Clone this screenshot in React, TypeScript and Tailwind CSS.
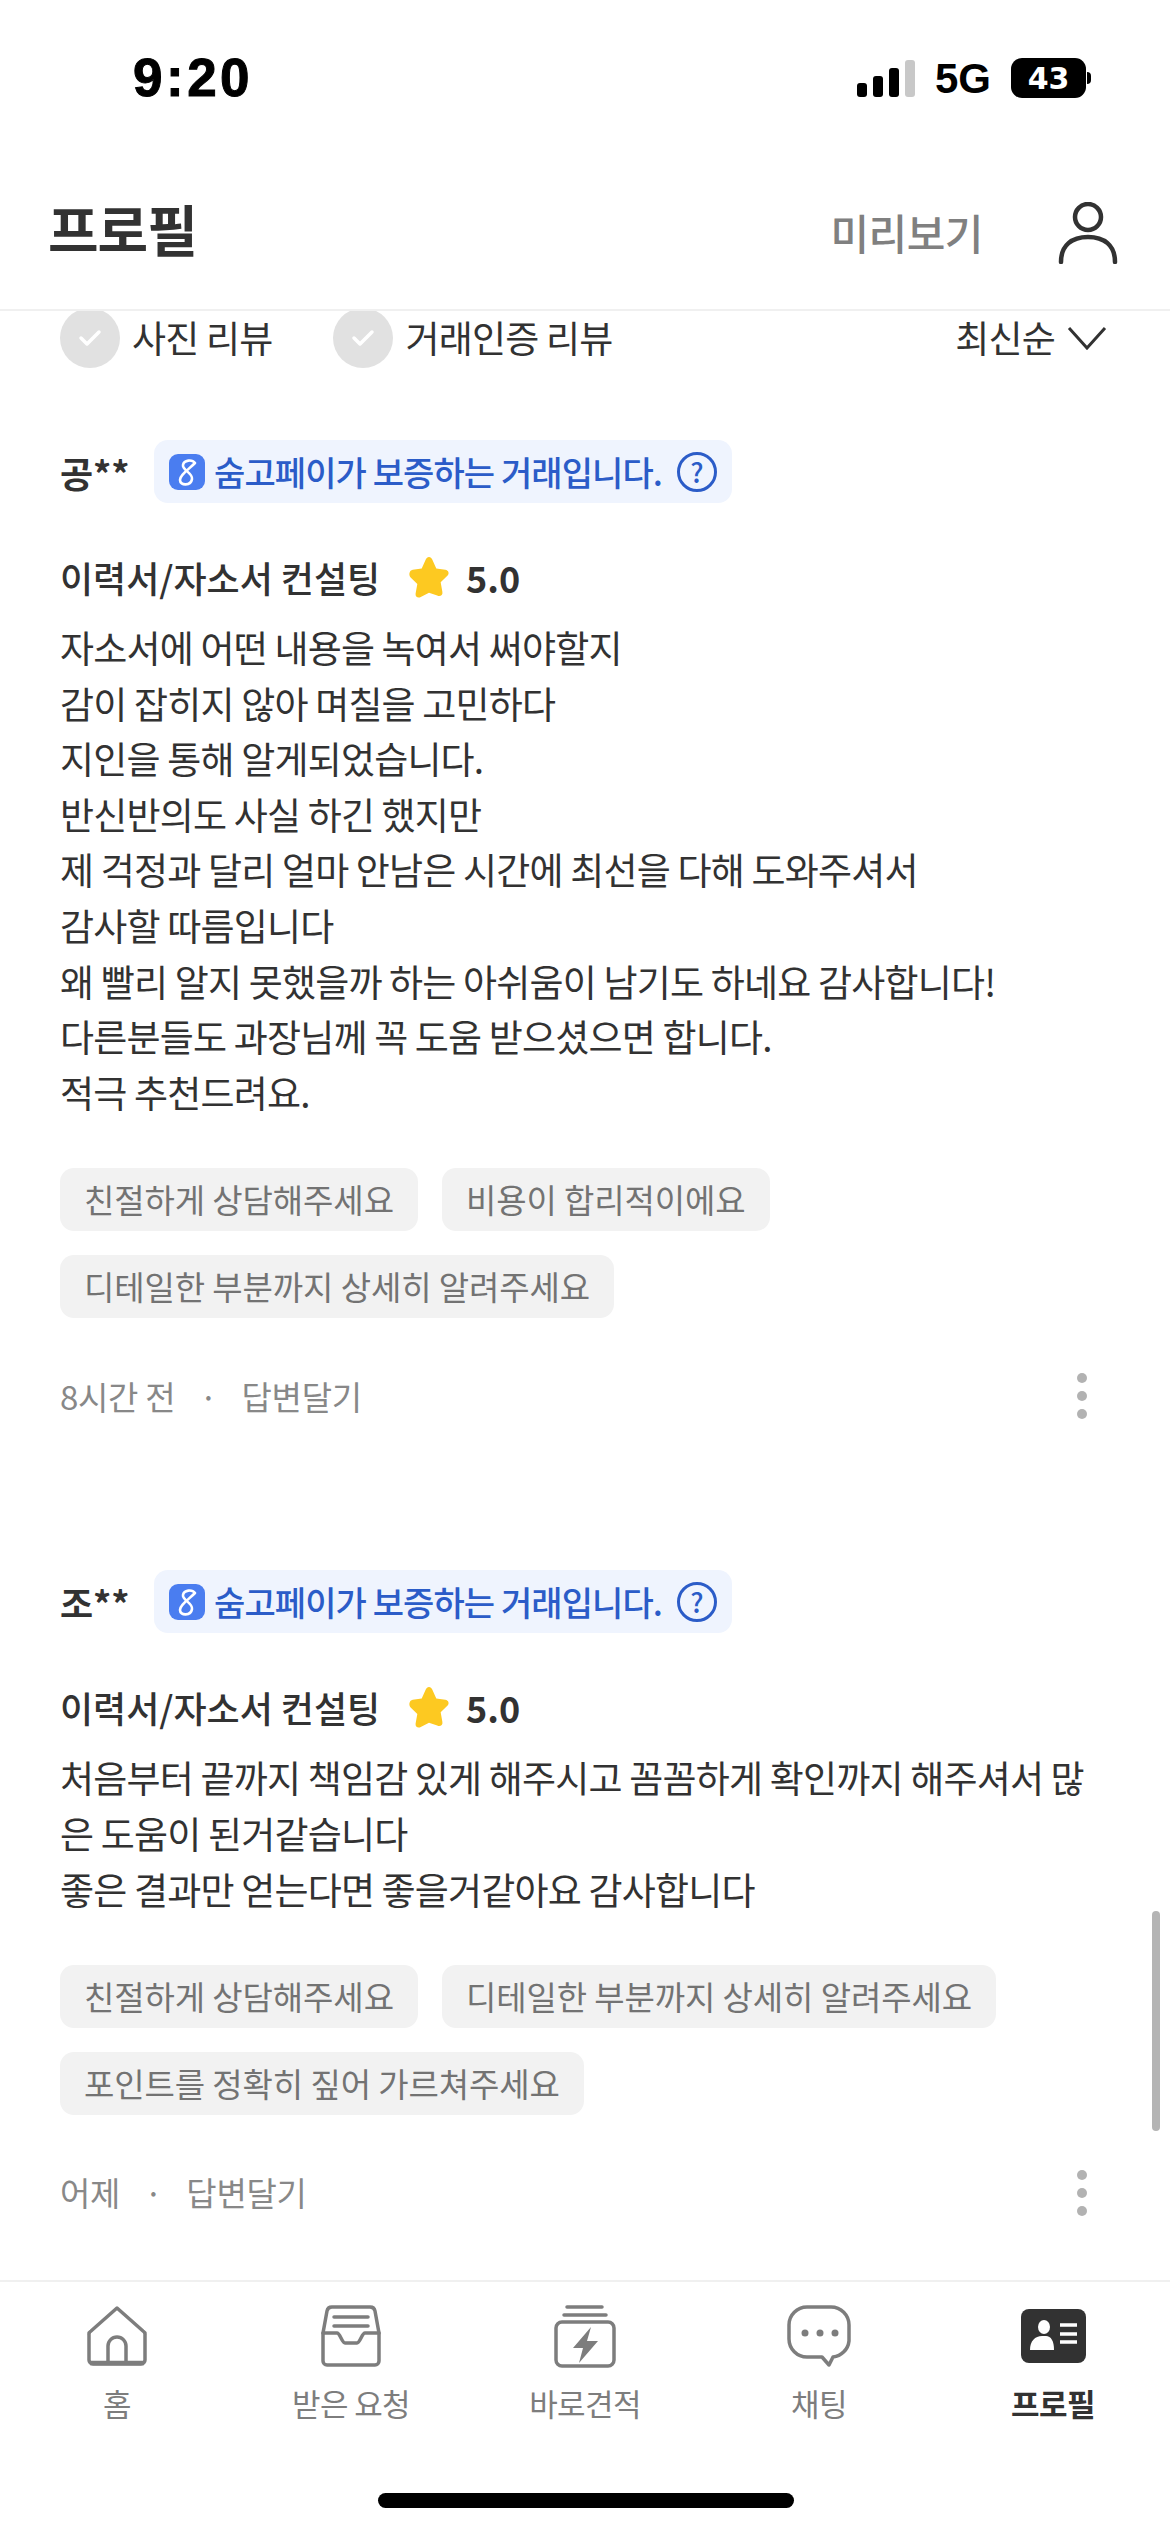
const font = { fontFamily: '"Noto Sans CJK KR", "Noto Sans", sans-serif' };
const latin = { fontFamily: '"Liberation Sans", sans-serif' };

interface Review {
  name: string;
  lines: string[];
  chips: string[][];
  time: string;
}

const reviews: Review[] = [
  {
    name: "공**",
    lines: [
      "자소서에 어떤 내용을 녹여서 써야할지",
      "감이 잡히지 않아 며칠을 고민하다",
      "지인을 통해 알게되었습니다.",
      "반신반의도 사실 하긴 했지만",
      "제 걱정과 달리 얼마 안남은 시간에 최선을 다해 도와주셔서",
      "감사할 따름입니다",
      "왜 빨리 알지 못했을까 하는 아쉬움이 남기도 하네요 감사합니다!",
      "다른분들도 과장님께 꼭 도움 받으셨으면 합니다.",
      "적극 추천드려요.",
    ],
    chips: [["친절하게 상담해주세요", "비용이 합리적이에요"], ["디테일한 부분까지 상세히 알려주세요"]],
    time: "8시간 전",
  },
  {
    name: "조**",
    lines: [
      "처음부터 끝까지 책임감 있게 해주시고 꼼꼼하게 확인까지 해주셔서 많",
      "은 도움이 된거같습니다",
      "좋은 결과만 얻는다면 좋을거같아요 감사합니다",
    ],
    chips: [["친절하게 상담해주세요", "디테일한 부분까지 상세히 알려주세요"], ["포인트를 정확히 짚어 가르쳐주세요"]],
    time: "어제",
  },
];

const CheckCircle = () => (
  <div className="flex h-[60px] w-[60px] items-center justify-center rounded-full bg-[#e1e1e1]">
    <svg width="28" height="22" viewBox="0 0 28 22" fill="none">
      <path d="M5 11l6 6L23 5" stroke="#fff" strokeWidth="3.5" strokeLinecap="round" strokeLinejoin="round" />
    </svg>
  </div>
);

const ReviewCard = ({ review }: { review: Review }) => (
  <div className="flex flex-col">
    <div className="flex h-[63px] items-center">
      <span className="w-[94px] text-[36px] font-bold text-[#323232]">{review.name}</span>
      <div className="flex h-[63px] w-[578px] items-center rounded-[14px] bg-[#eff4fe] pl-[15px]">
        <svg width="36" height="36" viewBox="0 0 36 36" className="shrink-0">
          <rect width="36" height="36" rx="9" fill="#4a7df0" />
          <path d="M26 9C23 5 15 6 14 11C13 16 24 19 23 25C22 32 11 32 11 26C11 21 19 16 26 9" fill="none" stroke="#fff" strokeWidth="2.6" strokeLinecap="round" strokeLinejoin="round" />
        </svg>
        <span className="ml-[9px] w-[463px] text-[34px] font-medium whitespace-nowrap tracking-[-0.9px] text-[#2b5cc8]">숨고페이가 보증하는 거래입니다.</span>
        <div className="flex h-[40px] w-[40px] items-center justify-center rounded-full border-[3px] border-[#2b5cc8] text-[27px] leading-none font-medium text-[#2b5cc8]">?</div>
      </div>
    </div>

    <div className="mt-[52px] flex h-[44px] items-center">
      <span className="w-[347px] text-[36px] font-medium whitespace-nowrap text-[#323232]">이력서/자소서 컨설팅</span>
      <svg width="46" height="44" viewBox="0 0 24 23" className="-ml-[1px]">
        <path d="M12 1c.8 0 1.300.6 1.700 1.400l2.100 4.600 4.700.7c1.800.3 2.300 2 1.100 3.200l-3.500 3.400.9 5c.3 1.700-1.200 2.700-2.700 1.900L12 19.700l-4.300 2.300c-1.500.8-3-.2-2.700-1.900l.9-5-3.500-3.400C1.200 10.500 1.700 8 3.500 7.700L8.200 7l2.100-4.600C10.700 1.600 11.200 1 12 1z" fill="#fdc921" />
      </svg>
      <span className="ml-[14px] text-[36px] font-bold text-[#323232]">5.0</span>
    </div>

    <div className="mt-[21px] text-[37px] leading-[55.6px] tracking-[-0.8px] whitespace-nowrap text-[#323232]">
      {review.lines.map((line) => (
        <div key={line}>{line}</div>
      ))}
    </div>

    <div className="mt-[48px] flex flex-col gap-[24px]">
      {review.chips.map((row, i) => (
        <div key={i} className="flex gap-[24px]">
          {row.map((chip) => (
            <span key={chip} className="flex h-[63px] items-center rounded-[14px] bg-[#f2f2f2] px-[24px] text-[33px] tracking-[-0.1px] text-[#737373]">
              {chip}
            </span>
          ))}
        </div>
      ))}
    </div>

    <div className="mt-[56px] flex h-[44px] items-center text-[33px] tracking-[-0.3px] text-[#888888]">
      <span>{review.time}</span>
      <span className="mx-[24px]">·</span>
      <span>답변달기</span>
      <div className="mr-[23px] ml-auto flex flex-col gap-[8px]">
        <div className="h-[10px] w-[10px] rounded-full bg-[#b2b2b2]" />
        <div className="h-[10px] w-[10px] rounded-full bg-[#b2b2b2]" />
        <div className="h-[10px] w-[10px] rounded-full bg-[#b2b2b2]" />
      </div>
    </div>
  </div>
);

const gray = "#7d7d7d";

const tabs = [
  {
    label: "홈",
    icon: (
      <svg width="60" height="60" viewBox="0 0 60 60" fill="none" stroke={gray} strokeWidth="3.500" strokeLinejoin="round">
        <path d="M30 2L4 25a4 4 0 0 0-2 4v25a4 4 0 0 0 4 4h48a4 4 0 0 0 4-4V29a4 4 0 0 0-2-4z" />
        <path d="M21 58V40a9 9 0 0 1 18 0v18" />
        <path d="M3 57h54" strokeWidth="4.500" />
      </svg>
    ),
  },
  {
    label: "받은 요청",
    icon: (
      <svg width="60" height="62" viewBox="0 0 60 62" fill="none" stroke={gray} strokeWidth="3.500" strokeLinejoin="round" strokeLinecap="round">
        <path d="M2 28L6 6a5 5 0 0 1 5-4h38a5 5 0 0 1 5 4l4 22" />
        <path d="M2 28v28a4 4 0 0 0 4 4h48a4 4 0 0 0 4-4V28H44c-3 0-5 10-8 10H24c-3 0-5-10-8-10z" />
        <path d="M13 12h34M13 21h34" />
      </svg>
    ),
  },
  {
    label: "바로견적",
    icon: (
      <svg width="62" height="63" viewBox="0 0 62 63" fill="none" stroke={gray} strokeWidth="3.500" strokeLinejoin="round" strokeLinecap="round">
        <path d="M13 2h35M10 10h42" />
        <rect x="2" y="17" width="58" height="44" rx="6" />
        <path d="M37 22L19 43h10l-4 15 19-22H33z" fill={gray} stroke="none" />
      </svg>
    ),
  },
  {
    label: "채팅",
    icon: (
      <svg width="64" height="62" viewBox="0 0 64 62" fill="none" stroke={gray} strokeWidth="3.500" strokeLinejoin="round">
        <path d="M20 2h24a18 18 0 0 1 18 18v16a18 18 0 0 1-16 16l-4 8-7-8H20A18 18 0 0 1 2 34V20A18 18 0 0 1 20 2z" />
        <circle cx="18" cy="28" r="3.500" fill={gray} stroke="none" />
        <circle cx="33" cy="28" r="3.500" fill={gray} stroke="none" />
        <circle cx="48" cy="28" r="3.500" fill={gray} stroke="none" />
      </svg>
    ),
  },
  {
    label: "프로필",
    active: true,
    icon: (
      <svg width="65" height="54" viewBox="0 0 65 54">
        <rect width="65" height="54" rx="8" fill="#323232" />
        <ellipse cx="23" cy="18" rx="6" ry="7" fill="#fff" />
        <path d="M9 41c0-9 5-14 12-14h4c5 0 8 5 8 14z" fill="#fff" />
        <path d="M39 16h17M39 25h17M39 33h17" stroke="#fff" strokeWidth="3.500" />
      </svg>
    ),
  },
];

export default function App() {
  return (
    <div className="relative flex h-[2532px] w-[1170px] flex-col overflow-hidden bg-white" style={font}>
      {/* status bar */}
      <div className="flex h-[156px] shrink-0 items-start justify-between pt-[48px] pr-[84px] pl-[133px]">
        <span className="text-[53px] leading-[60px] font-bold tracking-[3.5px] text-black [-webkit-text-stroke:1px_#000]" style={latin}>9:20</span>
        <div className="flex h-[60px] items-center">
          <div className="flex items-end gap-[6px]">
            <div className="h-[14px] w-[10px] rounded-[3px] bg-black" />
            <div className="h-[21px] w-[10px] rounded-[3px] bg-black" />
            <div className="h-[29px] w-[10px] rounded-[3px] bg-black" />
            <div className="h-[37px] w-[10px] rounded-[3px] bg-[#c8c8c8]" />
          </div>
          <span className="ml-[20px] text-[42px] font-bold text-black" style={latin}>5G</span>
          <div className="relative ml-[20px] flex h-[40px] w-[75px] items-center justify-center rounded-[11px] bg-black text-[30px] font-bold text-white" style={{ fontFamily: '"DejaVu Sans", sans-serif' }}>
            43
            <div className="absolute top-[14px] -right-[5px] h-[12px] w-[4px] rounded-r-full bg-black" />
          </div>
        </div>
      </div>

      {/* header */}
      <div className="z-10 flex h-[155px] shrink-0 items-center border-b-[2px] border-[#f0f0f0] bg-white pr-[52px] pb-[10px] pl-[48px]">
        <span className="text-[55px] font-bold tracking-[-1px] text-[#323232]">프로필</span>
        <span className="mt-[8px] mr-[75px] ml-auto text-[42px] font-medium tracking-[-0.5px] text-[#808080]">미리보기</span>
        <svg width="60" height="62" viewBox="0 0 60 62" fill="none" stroke="#323232" strokeWidth="4.500" strokeLinecap="round" className="mt-[10px]">
          <circle cx="30" cy="15" r="13" />
          <path d="M3 60c0-17 11-25 27-25s27 8 27 25" />
        </svg>
      </div>

      {/* scrolled list */}
      <div className="relative min-h-0 flex-1 overflow-hidden">
        <div className="-mt-[3px] flex h-[60px] items-center pr-[63px] pl-[60px] text-[37px] tracking-[-0.8px] text-[#323232]">
          <CheckCircle />
          <span className="ml-[12px]">사진 리뷰</span>
          <div className="ml-[61px]"><CheckCircle /></div>
          <span className="ml-[12px]">거래인증 리뷰</span>
          <span className="ml-auto">최신순</span>
          <svg width="40" height="24" viewBox="0 0 40 24" fill="none" stroke="#323232" strokeWidth="3" className="ml-[12px]">
            <path d="M2 2l18 20L38 2" />
          </svg>
        </div>

        <div className="mt-[72px] flex flex-col gap-[152px] px-[60px]">
          {reviews.map((r) => (
            <ReviewCard key={r.name} review={r} />
          ))}
        </div>

        <div className="absolute top-[1600px] right-[10px] h-[220px] w-[8px] rounded-full bg-[#b4b4b4]" />
      </div>

      {/* tab bar */}
      <div className="z-10 h-[252px] shrink-0 border-t-[2px] border-[#f0f0f0] bg-white">
        <div className="grid grid-cols-5 pt-[21px]">
          {tabs.map((t) => (
            <div key={t.label} className="flex flex-col items-center">
              <div className="flex h-[66px] items-center justify-center">{t.icon}</div>
              <span className={`mt-[11px] text-[31px] tracking-[-0.6px] ${t.active ? "font-bold text-[#323232]" : "text-[#7d7d7d]"}`}>{t.label}</span>
            </div>
          ))}
        </div>
        <div className="absolute bottom-[24px] left-[378px] h-[15px] w-[416px] rounded-full bg-black" />
      </div>
    </div>
  );
}
